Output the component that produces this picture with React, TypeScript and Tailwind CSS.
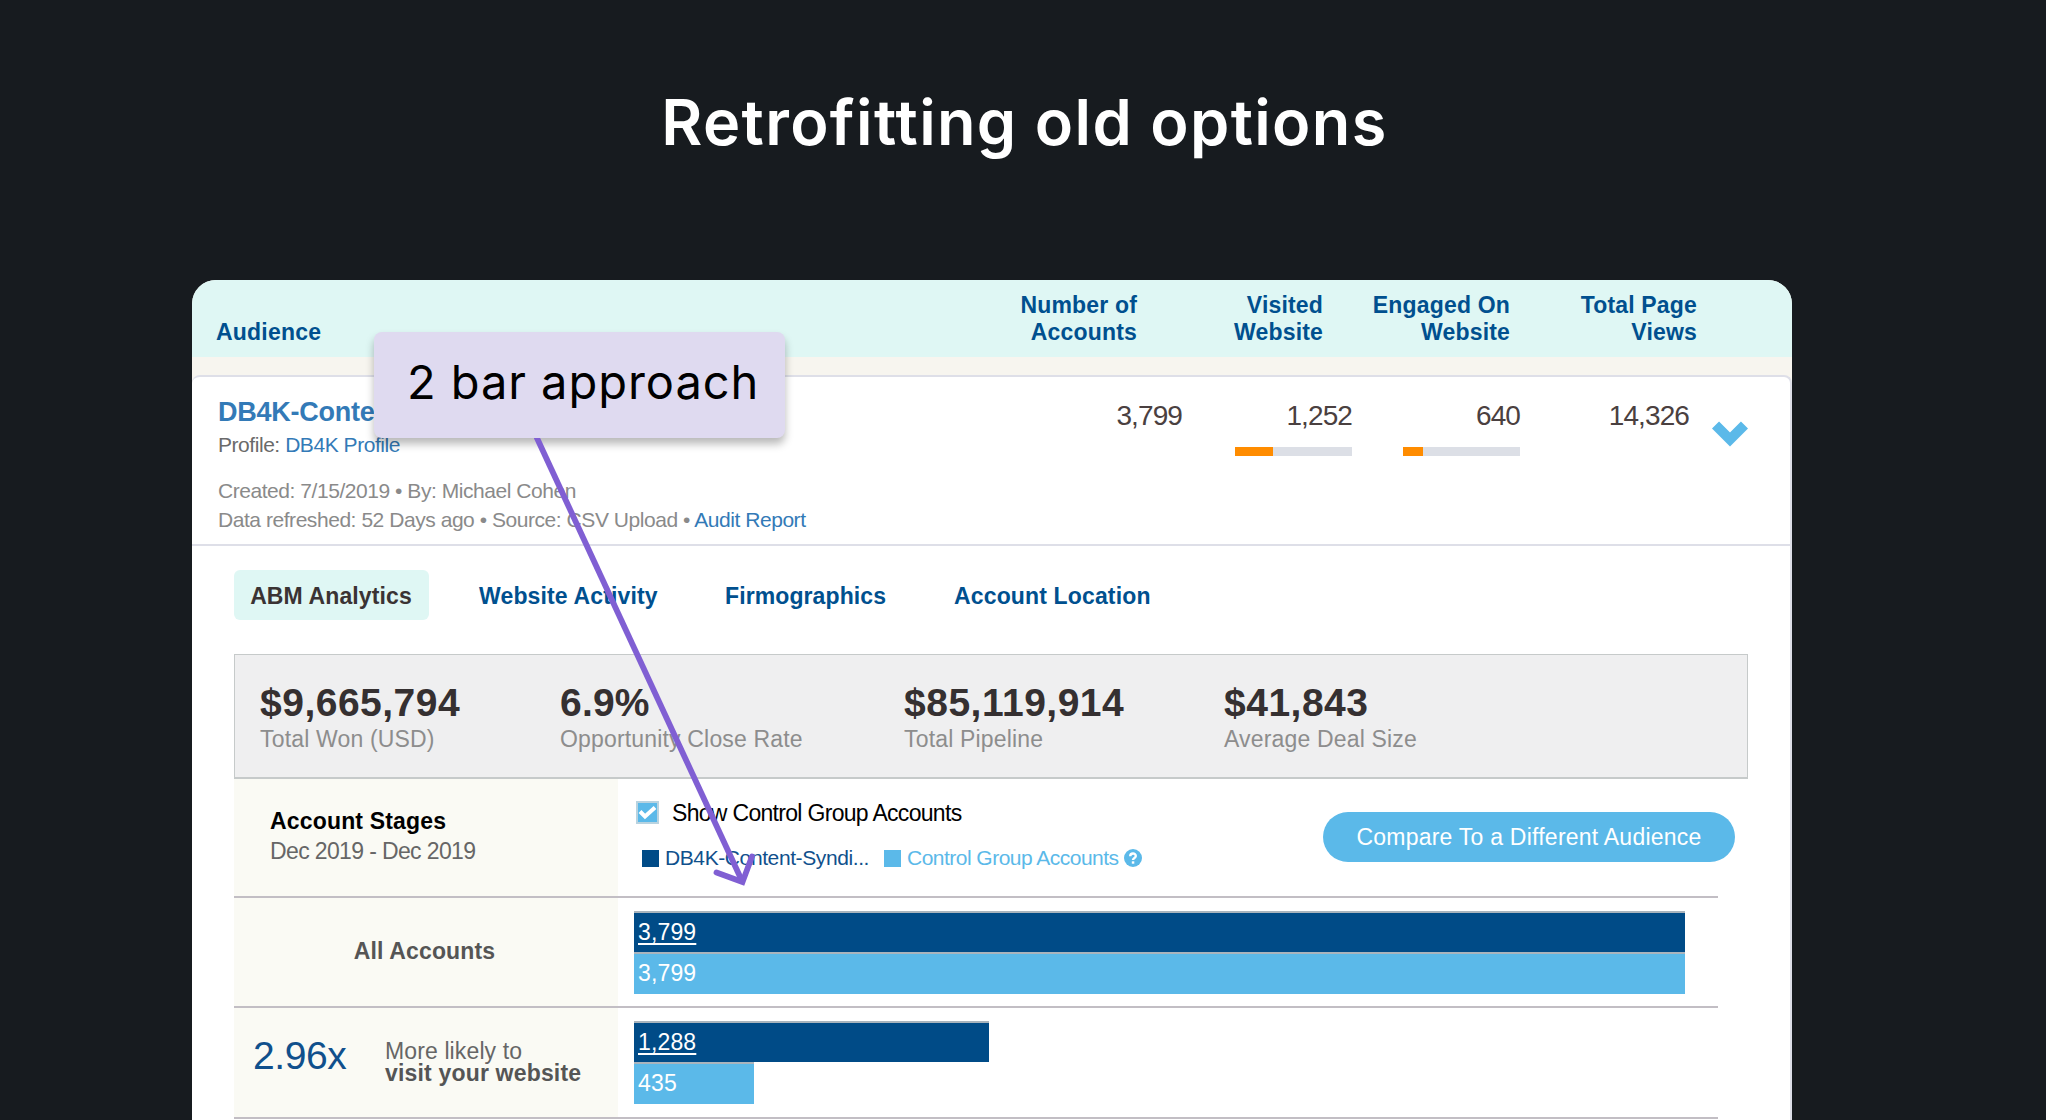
const columns = [
  { lines: ["Number of", "Accounts"], width: "w-[120px]" },
  { lines: ["Visited", "Website"], width: "w-[186px]" },
  { lines: ["Engaged On", "Website"], width: "w-[187px]" },
  { lines: ["Total Page", "Views"], width: "w-[187px]" },
];

function HeaderRow() {
  return (
    <div className="flex h-[77px] items-end bg-[#dff7f4] pb-[11px] pl-6 text-[23px] leading-[27px] font-bold text-[#00508f]">
      <div className="w-[801px] tracking-[0.2px]">Audience</div>
      {columns.map((c) => (
        <div key={c.lines[0]} className={`${c.width} text-right tracking-[0.17px]`}>
          <div>{c.lines[0]}</div>
          <div>{c.lines[1]}</div>
        </div>
      ))}
    </div>
  );
}

function Metric({ value, className, fill }: { value: string; className: string; fill?: string }) {
  return (
    <div className={className}>
      <div className="text-right text-[28px] leading-8 tracking-[-0.9px]">{value}</div>
      {fill && (
        <div className="mt-[15px] h-[9px] w-full bg-[#dcdfe6]">
          <div className={`h-full bg-[#ff8c00] ${fill}`} />
        </div>
      )}
    </div>
  );
}

function AudienceSummary() {
  return (
    <div className="flex h-[169px] rounded-t-lg border-t-2 border-r-2 border-[#dedfe8] bg-white pl-[26px]">
      <div className="w-[864px] pt-4 text-[21px] tracking-[-0.45px] text-[#8a8a8a]">
        <div className="pt-[3px] text-[27px] leading-8 font-bold tracking-[-0.25px] text-[#337ab7]">DB4K-Conte</div>
        <div className="mt-[3px] leading-7 text-[#6a6a6a]">
          Profile: <span className="text-[#337ab7]">DB4K Profile</span>
        </div>
        <div className="mt-[18px] leading-7">Created: 7/15/2019 • By: Michael Cohen</div>
        <div className="leading-[29px]">
          Data refreshed: 52 Days ago • Source: CSV Upload • <span className="text-[#337ab7]">Audit Report</span>
        </div>
      </div>
      <div className="flex pt-[23px] text-[#4a4040]">
        <Metric value="3,799" className="w-[100px]" />
        <Metric value="1,252" className="ml-[53px] w-[117px]" fill="w-[38px]" />
        <Metric value="640" className="ml-[51px] w-[117px]" fill="w-5" />
        <Metric value="14,326" className="w-[169px]" />
        <svg className="mt-[21px] ml-[23px] h-[27px] w-[36px]" viewBox="0 0 36 27" fill="none" stroke="#5bb9e9" strokeWidth="10">
          <path d="M3.500 4 L18 18.500 L32.500 4" />
        </svg>
      </div>
    </div>
  );
}

function Tabs() {
  return (
    <nav className="flex h-[50px] text-[23px] leading-[52px] font-bold text-[#00508f]">
      <div className="w-[195px] rounded-md bg-[#dff7f4] pr-px text-center tracking-[0.12px] text-[#3a3333]">ABM Analytics</div>
      <div className="ml-[50px] w-[246px] tracking-[0.15px]">Website Activity</div>
      <div className="w-[229px] tracking-[0.1px]">Firmographics</div>
      <div className="tracking-[0.15px]">Account Location</div>
    </nav>
  );
}

const stats = [
  { value: "$9,665,794", label: "Total Won (USD)", width: "w-[300px]", tracking: "tracking-[0.5px]" },
  { value: "6.9%", label: "Opportunity Close Rate", width: "w-[344px]", tracking: "tracking-[0.2px]" },
  { value: "$85,119,914", label: "Total Pipeline", width: "w-[320px]", tracking: "tracking-[0.5px]" },
  { value: "$41,843", label: "Average Deal Size", width: "w-[260px]", tracking: "tracking-[0.5px]" },
];

function Stats() {
  return (
    <div className="flex h-[125px] border border-b-2 border-[#c6caca] bg-[#efeff0] pt-[26px] pl-[25px]">
      {stats.map((s) => (
        <div key={s.label} className={s.width}>
          <div className={`text-[39px] leading-[44px] font-bold text-[#353031] ${s.tracking}`}>{s.value}</div>
          <div className="text-[23px] leading-7 tracking-[0.17px] text-[#8d8d8d]">{s.label}</div>
        </div>
      ))}
    </div>
  );
}

function Legend() {
  return (
    <div className="w-[689px] pt-[22px] pl-[18px]">
      <div className="flex h-[23px] items-center">
        <div className="flex size-[23px] items-center justify-center border-2 border-[#b9d3e0] bg-[#5bb9e9]">
          <svg className="size-[19px]" viewBox="0 0 19 19" fill="none" stroke="white" strokeWidth="4">
            <path d="M2 8.500 L7 13.500 L17 4.500" />
          </svg>
        </div>
        <div className="ml-[13px] pt-[2px] text-[23px] leading-[25px] tracking-[-0.69px] text-black">Show Control Group Accounts</div>
      </div>
      <div className="mt-[22px] flex h-[24px] items-center pl-[6px] text-[21px] tracking-[-0.4px]">
        <div className="size-[17px] bg-[#004b87]" />
        <div className="ml-[6px] w-[219px] text-[#10508c]">DB4K-Content-Syndi...</div>
        <div className="size-[17px] bg-[#5bb9e9]" />
        <div className="ml-[6px] tracking-[-0.52px] text-[#5bb9e9]">Control Group Accounts</div>
        <svg className="ml-[5px] size-[18px]" viewBox="0 0 18 18">
          <circle cx="9" cy="9" r="9" fill="#5bb9e9" />
          <path d="M6.200 7.200 C6.200 3.600 11.800 3.600 11.800 7 C11.800 9 9 8.800 9 11" fill="none" stroke="white" strokeWidth="2.400" />
          <rect x="7.800" y="12.300" width="2.500" height="2.400" fill="white" />
        </svg>
      </div>
    </div>
  );
}

function Bars({ primary, control, primaryWidth, controlWidth }: { primary: string; control: string; primaryWidth: string; controlWidth: string }) {
  return (
    <div className="pt-[13px] pl-4 text-[23px] tracking-[0.15px] text-white">
      <div className={`h-[41px] border-t-2 border-[#a9b4bd] bg-[#004b87] pl-1 leading-[38px] ${primaryWidth}`}>
        <span className="underline decoration-2 underline-offset-[3px]">{primary}</span>
      </div>
      <div className={`h-[42px] border-t-2 border-[#a9b4bd] bg-[#5bb9e9] pl-1 leading-[39px] ${controlWidth}`}>{control}</div>
    </div>
  );
}

function StagesTable() {
  return (
    <div>
      <div className="flex h-[117px] w-[1502px]">
        <div className="w-[384px] bg-[#fafaf4] pt-[27px] pl-[36px] text-[23px] leading-[30px]">
          <div className="font-bold tracking-[0.17px] text-black">Account Stages</div>
          <div className="tracking-[-0.63px] text-[#666]">Dec 2019 - Dec 2019</div>
        </div>
        <Legend />
        <div className="mt-[33px] ml-4 h-[50px] w-[412px] rounded-full bg-[#5bb9e9] text-center text-[23px] leading-[51px] tracking-[0.23px] text-white">
          Compare To a Different Audience
        </div>
      </div>
      <div className="flex h-[110px] w-[1484px] border-t-2 border-[#c2bec4]">
        <div className="w-[384px] bg-[#fafaf4] pr-[3px] text-center text-[23px] leading-[106px] font-bold tracking-[0.15px] text-[#555]">All Accounts</div>
        <Bars primary="3,799" control="3,799" primaryWidth="w-[1051px]" controlWidth="w-[1051px]" />
      </div>
      <div className="flex h-[113px] w-[1484px] border-y-2 border-[#c2bec4]">
        <div className="flex w-[384px] bg-[#fafaf4]">
          <div className="w-[151px] pl-[19px] text-[39px] leading-[96px] tracking-[-0.4px] text-[#10508c]">2.96x</div>
          <div className="pt-[32px] text-[23px] leading-[22px] text-[#666]">
            <div className="tracking-[0.12px]">More likely to</div>
            <div className="font-bold tracking-[0.18px] text-[#555]">visit your website</div>
          </div>
        </div>
        <Bars primary="1,288" control="435" primaryWidth="w-[355px]" controlWidth="w-[120px]" />
      </div>
    </div>
  );
}

function Annotation() {
  return (
    <>
      <div className="absolute top-[332px] left-[374px] h-[106px] w-[411px] rounded-lg bg-[#dfdaf0] pl-[33px] font-['Inter'] text-[47px] leading-[100px] tracking-[0.95px] whitespace-nowrap text-black shadow-[0_6px_8px_rgba(0,0,0,0.28)]">
        2 bar approach
      </div>
      <svg className="absolute top-[438px] left-[530px] h-[452px] w-[230px]" viewBox="530 438 230 452" fill="none" stroke="#805fd3" strokeWidth="5.800">
        <path d="M536.500 437 L742.500 882" />
        <path d="M716.500 872.500 L742.500 882 L752 856.500" strokeLinecap="round" />
      </svg>
    </>
  );
}

export default function App() {
  return (
    <div className="relative h-[1120px] w-[2046px] overflow-hidden bg-[#171b1f] font-['Liberation_Sans',sans-serif]">
      <h1 className="h-[280px] pt-[82px] pl-[3px] text-center font-['Inter'] text-[63px] leading-[80px] font-semibold tracking-[1.35px] text-white">
        Retrofitting old options
      </h1>
      <main className="ml-48 h-[840px] w-[1600px] overflow-hidden rounded-t-[24px] bg-[#f7f5ef]">
        <HeaderRow />
        <div className="h-[18px]" />
        <AudienceSummary />
        <div className="h-[576px] border-t-2 border-r-2 border-[#dedfe8] bg-white pt-[24px] pl-[42px]">
          <Tabs />
          <div className="mt-[34px] w-[1514px]">
            <Stats />
          </div>
          <StagesTable />
        </div>
      </main>
      <Annotation />
    </div>
  );
}
